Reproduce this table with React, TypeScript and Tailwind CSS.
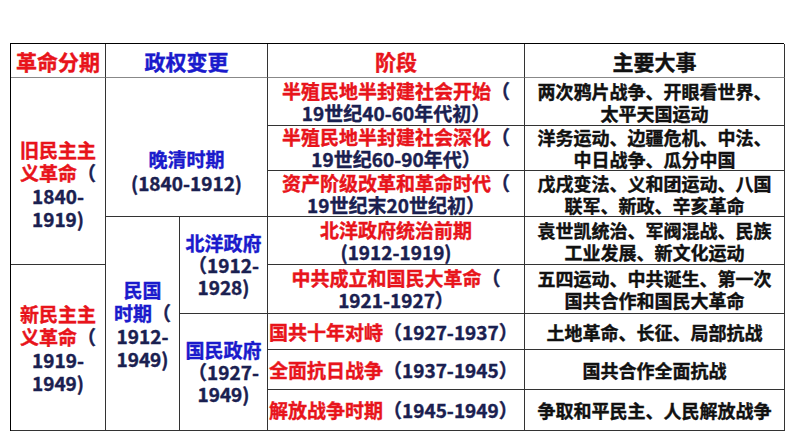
const R = ({ children }: { children: React.ReactNode }) => (
  <span className="text-[#e8141b]">{children}</span>
);
const B = ({ children }: { children: React.ReactNode }) => (
  <span className="text-[#1a1acc]">{children}</span>
);
const N = ({ children }: { children: React.ReactNode }) => (
  <span className="text-[#1a2050]">{children}</span>
);

const Cell = ({ className = "", children }: { className?: string; children: React.ReactNode }) => (
  <div
    className={`flex items-center justify-center text-center border-r border-b border-[#333] font-bold [-webkit-text-stroke:0.4px_currentColor] ${className}`}
  >
    <div>{children}</div>
  </div>
);

const stages = [
  { row: "row-start-2", title: "半殖民地半封建社会开始", sub: "（", line2: "19世纪40-60年代初）" },
  { row: "row-start-3", title: "半殖民地半封建社会深化", sub: "（", line2: "19世纪60-90年代）" },
  { row: "row-start-4", title: "资产阶级改革和革命时代", sub: "（", line2: "19世纪末20世纪初）" },
  { row: "row-start-5", title: "北洋政府统治前期", sub: "", line2: "(1912-1919)" },
  { row: "row-start-6", title: "中共成立和国民大革命", sub: "（", line2: "1921-1927）" },
];

const shortStages = [
  { row: "row-start-7", title: "国共十年对峙", years: "（1927-1937）" },
  { row: "row-start-8", title: "全面抗日战争", years: "（1937-1945）" },
  { row: "row-start-9", title: "解放战争时期", years: "（1945-1949）" },
];

const events = [
  { row: "row-start-2", lines: ["两次鸦片战争、开眼看世界、", "太平天国运动"] },
  { row: "row-start-3", lines: ["洋务运动、边疆危机、中法、", "中日战争、瓜分中国"] },
  { row: "row-start-4", lines: ["戊戌变法、义和团运动、八国", "联军、新政、辛亥革命"] },
  { row: "row-start-5", lines: ["袁世凯统治、军阀混战、民族", "工业发展、新文化运动"] },
  { row: "row-start-6", lines: ["五四运动、中共诞生、第一次", "国共合作和国民大革命"] },
  { row: "row-start-7", lines: ["土地革命、长征、局部抗战"] },
  { row: "row-start-8", lines: ["国共合作全面抗战"] },
  { row: "row-start-9", lines: ["争取和平民主、人民解放战争"] },
];

export default function App() {
  return (
    <div className="w-[794px] h-[447px] bg-white pt-[43px] pl-[10px] font-['Noto_Sans_CJK_SC','Noto_Sans',sans-serif]">
      <div className="grid grid-cols-[95px_74px_88px_257px_260px] grid-rows-[34px_48px_45px_46px_48px_49px_36px_40px_41px] w-[774px] border-t border-l border-black">
        {/* header */}
        <Cell className="col-start-1 row-start-1 text-[21px] leading-[26px] border-b-[#888]">
          <R>革命分期</R>
        </Cell>
        <Cell className="col-start-2 col-span-2 row-start-1 text-[21px] leading-[26px] border-b-[#888]">
          <B>政权变更</B>
        </Cell>
        <Cell className="col-start-4 row-start-1 text-[21px] leading-[26px] border-b-[#888]">
          <R>阶段</R>
        </Cell>
        <Cell className="col-start-5 row-start-1 text-[21px] leading-[26px] text-[#111] border-b-[#888]">
          主要大事
        </Cell>

        {/* 革命分期 */}
        <Cell className="col-start-1 row-start-2 row-span-4 text-[19px] leading-[23px] pt-[25px]">
          <R>旧民主主<br />义革命</R>
          <N>（<br />1840-<br />1919)</N>
        </Cell>
        <Cell className="col-start-1 row-start-6 row-span-4 text-[19px] leading-[23px]">
          <R>新民主主<br />义革命</R>
          <N>（<br />1919-<br />1949)</N>
        </Cell>

        {/* 政权变更 */}
        <Cell className="col-start-2 col-span-2 row-start-2 row-span-3 text-[19px] leading-[24px] pt-[47px]">
          <B>晚清时期</B>
          <br />
          <N>(1840-1912)</N>
        </Cell>
        <Cell className="col-start-2 row-start-5 row-span-5 text-[19px] leading-[23px]">
          <B>民国<br />时期</B>
          <N>（<br />1912-<br />1949)</N>
        </Cell>
        <Cell className="col-start-3 row-start-5 row-span-2 text-[19px] leading-[22px]">
          <B>北洋政府</B>
          <br />
          <N>（1912-<br />1928)</N>
        </Cell>
        <Cell className="col-start-3 row-start-7 row-span-3 text-[19px] leading-[22px]">
          <B>国民政府</B>
          <br />
          <N>（1927-<br />1949)</N>
        </Cell>

        {/* 阶段 */}
        {stages.map((s) => (
          <Cell key={s.title} className={`col-start-4 ${s.row} text-[19px] leading-[22px]`}>
            <R>{s.title}</R>
            <N>{s.sub}</N>
            <br />
            <N>{s.line2}</N>
          </Cell>
        ))}
        {shortStages.map((s) => (
          <Cell key={s.title} className={`col-start-4 ${s.row} text-[19px] leading-[22px] !justify-start pl-[1px]`}>
            <R>{s.title}</R>
            <N>{s.years}</N>
          </Cell>
        ))}

        {/* 主要大事 */}
        {events.map((e) => (
          <Cell key={e.lines[0]} className={`col-start-5 ${e.row} text-[18px] leading-[22px] text-[#111]`}>
            {e.lines.map((l, i) => (
              <div key={i}>{l}</div>
            ))}
          </Cell>
        ))}
      </div>
    </div>
  );
}
